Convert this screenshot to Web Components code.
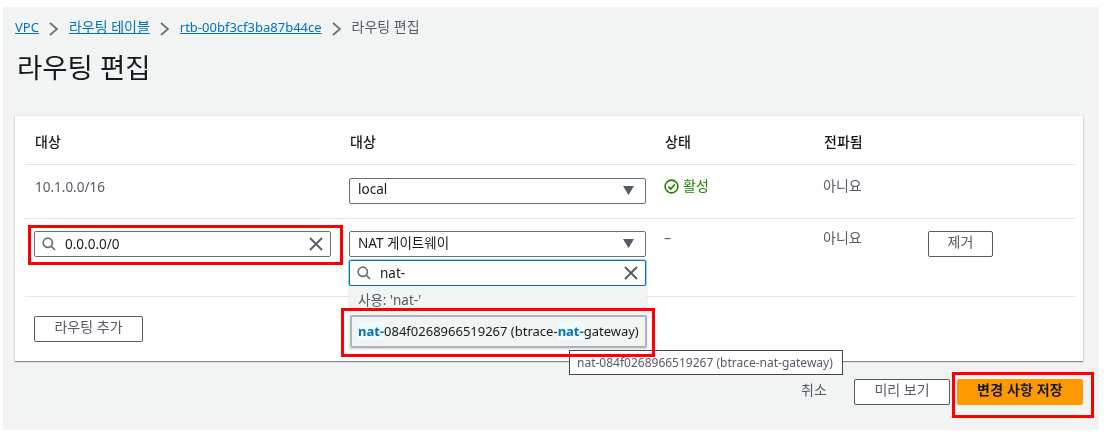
<!DOCTYPE html>
<html lang="ko">
<head>
<meta charset="utf-8">
<title>라우팅 편집</title>
<style>
  html, body { margin: 0; background: #fff; }
  body { font-family: "Noto Sans", "Noto Sans CJK KR", sans-serif; font-size: 13px; color: #16191f; }
</style>
</head>
<body>
<edit-routes-page></edit-routes-page>

<script>
(function () {
    const SEARCH = `<svg width="14" height="14" viewBox="0 0 14 14" fill="none" stroke="#687078" stroke-width="1.7"><circle cx="5.8" cy="5.8" r="4.6"/><path d="M9.2 9.2 13 13"/></svg>`;
    const CLEAR = `<svg width="14" height="14" viewBox="0 0 14 14" fill="none" stroke="#545b64" stroke-width="1.8"><path d="M1 1 13 13M13 1 1 13"/></svg>`;
    const CARET = `<svg width="11" height="9" viewBox="0 0 11 9"><path d="M0 0H11L5.5 9Z" fill="#545b64"/></svg>`;
    const CHECK = `<svg width="15" height="15" viewBox="0 0 15 15" fill="none" stroke="#1d8102" stroke-width="1.6"><circle cx="7.5" cy="7.5" r="6.4"/><path d="M4.4 7.6 6.8 10 10.8 5.2"/></svg>`;
    const CHEVRON = `<svg width="9" height="14" viewBox="0 0 9 14" fill="none" stroke="#687078" stroke-width="1.8"><path d="M1 1 8 7 1 13"/></svg>`;

    class BreadCrumbs extends HTMLElement {
        constructor() {
            super();
            this.attachShadow({ mode: 'open' }).innerHTML = `
<style>
    :host { display: flex; align-items: center; height: 20px; font-size: 13px; color: #545b64; }
    a { color: #0073bb; text-decoration: underline; }
    .ko { font-size: 14px; position: relative; top: -1px; }
    svg { margin: 3px 11px 0 10px; }
</style>
<a>VPC</a>${CHEVRON}<a class="ko">라우팅 테이블</a>${CHEVRON}<a>rtb-00bf3cf3ba87b44ce</a>${CHEVRON}<span class="ko">라우팅 편집</span>`;
        }
    }

    class AwsButton extends HTMLElement {
        constructor() {
            super();
            this.attachShadow({ mode: 'open' }).innerHTML = `
<style>
    :host { display: inline-flex; box-sizing: border-box; height: 26px; align-items: flex-start; justify-content: center;
        border: 1px solid #545b64; border-radius: 2px; background: #fff; color: #545b64; font-size: 14px; line-height: 19px; }
    :host([primary]) { background: #ff9900; border-color: #ff9900; color: #16191f; font-weight: 700; letter-spacing: .15px; }
    :host([plain]) { border-color: transparent; background: none; }
</style>
<slot></slot>`;
        }
    }

    class FieldBox extends HTMLElement {
        constructor() {
            super();
            this.attachShadow({ mode: 'open' });
        }
        connectedCallback() {
            const search = this.getAttribute('kind') === 'search';
            const value = this.getAttribute('value');
            this.shadowRoot.innerHTML = `
<style>
    :host { display: flex; box-sizing: border-box; width: 297px; height: 26px; align-items: center;
        padding: 0 11px 2px 8px; border: 1px solid #687078; border-radius: 2px; background: #fff; color: #16191f; font-size: 13.5px; }
    :host([kind=search]) { padding: 0 7px; gap: 9px; }
    :host([focused]) { border-color: #0073bb; box-shadow: 0 0 0 1px rgba(0,115,187,.35); }
    span { flex: 1; white-space: nowrap; position: relative; top: -1px; }
    :host([kind=search]) span { top: 0; }
    svg { flex: none; }
</style>
${search ? SEARCH : ''}<span>${value}</span>${search ? CLEAR : CARET}`;
        }
    }

    class StatusText extends HTMLElement {
        constructor() {
            super();
            this.attachShadow({ mode: 'open' }).innerHTML = `
<style>
    :host { display: inline-flex; align-self: start; align-items: center; gap: 4px; color: #1d8102; font-size: 14px; line-height: 18px; }
</style>
${CHECK}<slot></slot>`;
        }
    }

    class RouteRow extends HTMLElement {
        constructor() {
            super();
            this.attachShadow({ mode: 'open' }).innerHTML = `
<style>
    :host { display: grid; grid-template-columns: 315px 315px 159px 105px 1fr; box-sizing: border-box;
        margin: 0 8px 0 10px; padding: 0 0 0 9px; border-bottom: 1px solid #e3e5e6; position: relative; }
    :host([last]) { border-bottom: 0; }
</style>
<slot></slot>`;
        }
    }

    class GatewayPicker extends HTMLElement {
        constructor() {
            super();
            this.attachShadow({ mode: 'open' }).innerHTML = `
<style>
    :host { display: block; position: relative; width: 297px; }
    .drop { position: absolute; z-index: 2; left: 0; top: 29px; width: 298px; }
    .panel { background: #f2f3f3; box-shadow: 0 1px 2px rgba(0,0,0,.18); height: 62px; box-sizing: border-box; padding-top: 5px; }
    .hint { height: 24px; padding-left: 9px; font-size: 13.5px; line-height: 18px; color: #545b64; }
    .option { box-sizing: border-box; height: 33px; margin-left: 1px; padding: 5px 0 0 6px; background: #f2f3f3;
        border: 2px solid #aab7b8; border-radius: 2px; font-size: 13px; line-height: 18px; color: #16191f; white-space: nowrap; }
    b { color: #0073bb; background: #f1faff; font-weight: 700; }
</style>
<field-box value="NAT 게이트웨이"></field-box>
<div class="drop">
    <field-box kind="search" value="nat-" focused></field-box>
    <div class="panel">
        <div class="hint">사용: 'nat-'</div>
        <div class="option"><b>nat-</b>084f0268966519267 (btrace-<b>nat-</b>gateway)</div>
    </div>
</div>`;
        }
    }

    class MarkBox extends HTMLElement {
        constructor() {
            super();
            this.attachShadow({ mode: 'open' }).innerHTML = `
<style>
    :host { display: block; position: absolute; box-sizing: border-box; border: 3px solid #ff0000; z-index: 3; pointer-events: none; }
</style>`;
        }
    }

    class EditRoutesPage extends HTMLElement {
        constructor() {
            super();
            this.attachShadow({ mode: 'open' }).innerHTML = `
<style>
    :host { display: block; position: relative; width: 1106px; height: 440px; overflow: hidden; }
    .page { position: relative; box-sizing: border-box; width: 1096px; height: 423px; margin: 7px 0 0 3px; padding: 10px 16px 0 12px; background: #f2f3f3; filter: blur(.35px); }
    h1 { margin: 11px 0 0 2px; height: 55px; font-size: 27.5px; line-height: 40px; font-weight: 400; color: #16191f; }
    .card { box-sizing: border-box; height: 245px; margin-top: 13px; background: #fff; box-shadow: 0 1px 1px rgba(0,28,36,.45), 0 0 1px rgba(0,28,36,.3); }
    .head { height: 49px; }
    .th { font-weight: 500; font-size: 14px; line-height: 20px; margin: 16px 0 0 1px; }
    .r1 { height: 54px; }
    .r2 { height: 78px; }
    .td { line-height: 18px; font-size: 14px; color: #545b64; }
    .r1 .td, .r1 status-text { margin-top: 12px; }
    .r1 field-box { margin-top: 13px; }
    .r2 .td { margin-top: 10px; }
    .r2 > field-box, .r2 > gateway-picker, .remove { margin-top: 12px; }
    .r1 .latin { font-size: 13.5px; margin: 13px 0 0 1px; }
    .remove { width: 65px; }
    .r3 { height: 64px; }
    .add { width: 109px; margin-top: 19px; grid-column: 1; justify-self: start; }
    .footer { display: flex; justify-content: flex-end; align-items: center; gap: 7px; margin-top: 18px; }
    .footer .cancel { width: 58px; color: #545b64; margin-right: 4px; }
    .preview { width: 96px; }
    .save { width: 126px; }
    .tip { position: absolute; z-index: 4; left: 566px; top: 343px; box-sizing: border-box; width: 274px; height: 25px;
        padding: 3px 0 0 7px; background: #fff; border: 1px solid #414750; font-size: 12px; line-height: 18px; color: #545b64; white-space: nowrap; }
</style>
<div class="page">
    <bread-crumbs></bread-crumbs>
    <h1>라우팅 편집</h1>
    <div class="card">
        <route-row class="head">
            <span class="th">대상</span><span class="th">대상</span><span class="th">상태</span><span class="th">전파됨</span>
        </route-row>
        <route-row class="r1">
            <span class="td latin">10.1.0.0/16</span>
            <field-box value="local"></field-box>
            <status-text>활성</status-text>
            <span class="td">아니요</span>
        </route-row>
        <route-row class="r2">
            <field-box kind="search" value="0.0.0.0/0"></field-box>
            <gateway-picker></gateway-picker>
            <span class="td">–</span>
            <span class="td">아니요</span>
            <aws-button class="remove">제거</aws-button>
        </route-row>
        <route-row class="r3" last>
            <aws-button class="add">라우팅 추가</aws-button>
        </route-row>
    </div>
    <div class="footer">
        <aws-button class="cancel" plain>취소</aws-button>
        <aws-button class="preview">미리 보기</aws-button>
        <aws-button class="save" primary>변경 사항 저장</aws-button>
    </div>
    <div class="tip">nat-084f0268966519267 (btrace-nat-gateway)</div>
</div>
<mark-box style="left:28px;top:225px;width:315px;height:40px"></mark-box>
<mark-box style="left:341px;top:308px;width:314px;height:49px"></mark-box>
<mark-box style="left:952px;top:372px;width:142px;height:46px"></mark-box>`;
        }
    }

    customElements.define('bread-crumbs', BreadCrumbs);
    customElements.define('aws-button', AwsButton);
    customElements.define('field-box', FieldBox);
    customElements.define('status-text', StatusText);
    customElements.define('route-row', RouteRow);
    customElements.define('gateway-picker', GatewayPicker);
    customElements.define('mark-box', MarkBox);
    customElements.define('edit-routes-page', EditRoutesPage);
})();
</script>
</body>
</html>
